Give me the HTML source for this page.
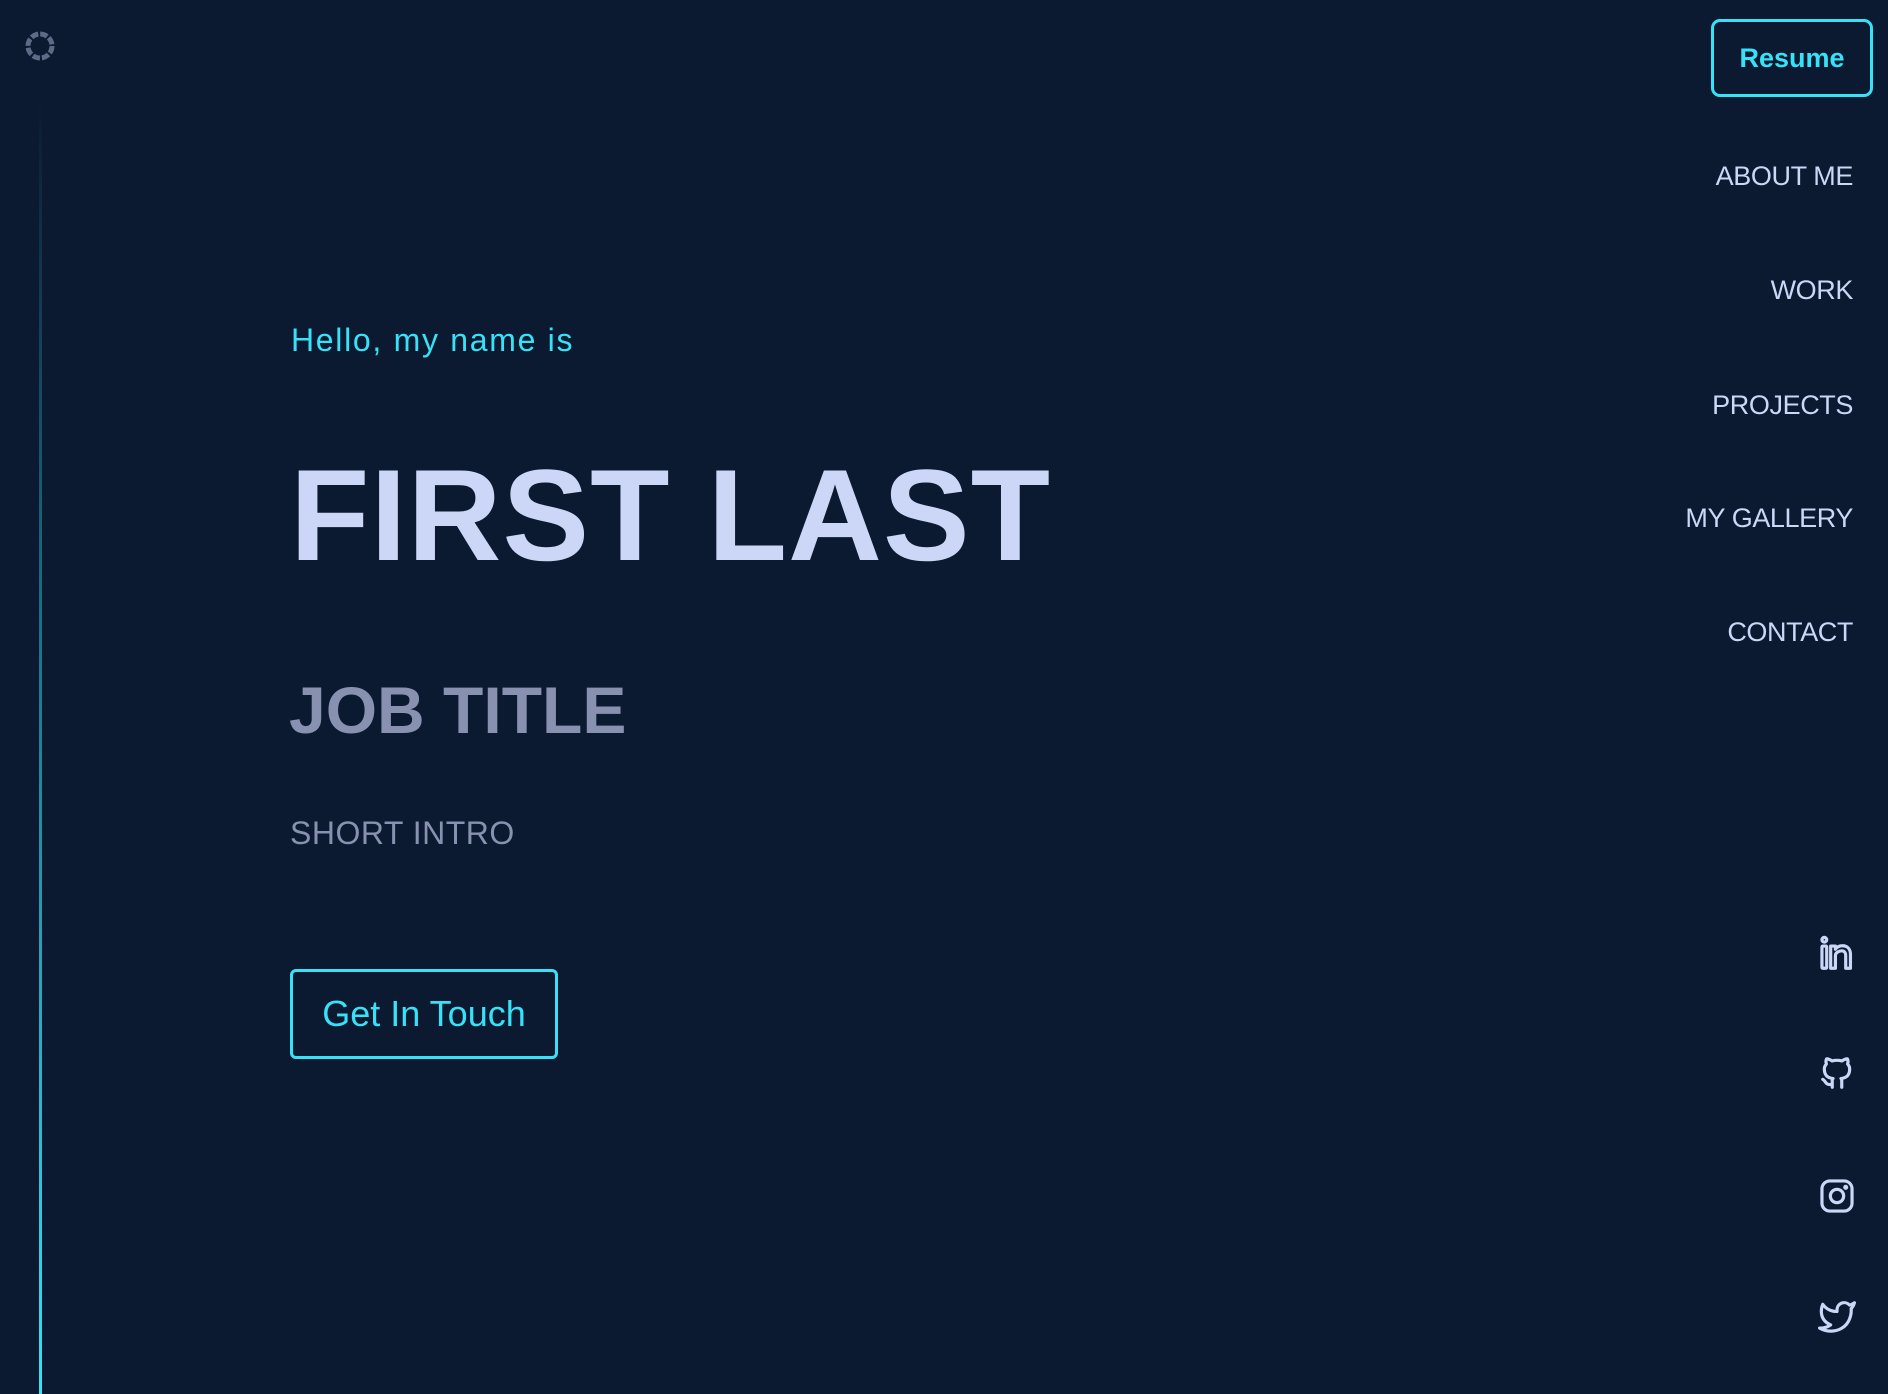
<!DOCTYPE html>
<html><head><meta charset="utf-8"><style>
html,body{margin:0;padding:0;width:1888px;height:1394px;background:#0b1a30;overflow:hidden;font-family:"Liberation Sans",sans-serif;}
.abs{position:absolute;}
.line{left:39px;top:100px;width:3px;height:1294px;background:linear-gradient(#0b1a30,#1b6f88 40%,#37e1f7);}
.resume{left:1711px;top:19px;width:156px;height:72px;border:3px solid #37e1f7;border-radius:9px;color:#37e1f7;font-weight:bold;font-size:27px;display:flex;align-items:center;justify-content:center;}
.nav{right:35px;color:#ccd6f6;font-size:27px;font-weight:300;letter-spacing:-0.4px;line-height:30px;}
.hello{left:291px;top:322px;color:#37e1f7;font-size:32px;letter-spacing:1.7px;}
.name{left:290px;top:440px;color:#ccd6f6;font-size:130px;font-weight:bold;line-height:150px;letter-spacing:1px;}
.job{left:289px;top:670px;color:#8892b0;font-size:66px;font-weight:bold;line-height:80px;}
.intro{left:290px;top:815px;color:#8892b0;font-size:32px;letter-spacing:0.5px;}
.btn{left:290px;top:969px;width:262px;height:84px;border:3px solid #37e1f7;border-radius:6px;color:#37e1f7;font-size:36px;display:flex;align-items:center;justify-content:center;}
svg.ic{position:absolute;left:1818px;width:38px;height:38px;fill:none;stroke:#ccd6f6;stroke-width:2;stroke-linecap:round;stroke-linejoin:round;}
</style></head><body>
<svg class="abs" style="left:24px;top:30px" width="32" height="32" viewBox="0 0 32 32">
<g stroke="#5d6b86" stroke-width="5" fill="none">
<circle cx="16" cy="16" r="12" stroke-dasharray="7.4 2"/>
</g></svg>
<div class="abs line"></div>
<div class="abs resume">Resume</div>
<div class="abs nav" style="top:161px">ABOUT ME</div>
<div class="abs nav" style="top:275px">WORK</div>
<div class="abs nav" style="top:390px">PROJECTS</div>
<div class="abs nav" style="top:503px">MY GALLERY</div>
<div class="abs nav" style="top:617px">CONTACT</div>
<div class="abs hello">Hello, my name is</div>
<div class="abs name">FIRST LAST</div>
<div class="abs job">JOB TITLE</div>
<div class="abs intro">SHORT INTRO</div>
<div class="abs btn">Get In Touch</div>
<svg class="ic" style="top:935px" viewBox="0 0 24 24"><circle cx="4" cy="3" r="1.5"/><rect x="2.5" y="7" width="3" height="14" rx=".5"/><path d="M8 21V7h3v2c1-1.5 2.5-2.2 4.5-2.2 3 0 5 2 5 5.5V21h-3v-8c0-2-1-3-2.5-3S11 11 11 13v8z"/></svg>
<svg class="ic" style="top:1054px" viewBox="0 0 24 24"><path d="M9 19c-4.3 1.4-4.3-2.5-6-3m12 5v-3.5c0-1 .1-1.4-.5-2 2.8-.3 5.5-1.4 5.5-6a4.6 4.6 0 0 0-1.3-3.2 4.2 4.2 0 0 0-.1-3.2s-1.1-.3-3.5 1.3a12.3 12.3 0 0 0-6.200 0C6.5 2.8 5.4 3.1 5.4 3.1a4.2 4.2 0 0 0-.1 3.2A4.6 4.6 0 0 0 4 9.5c0 4.6 2.7 5.700 5.5 6-.6.6-.6 1.2-.5 2V21"/></svg>
<svg class="ic" style="top:1177px" viewBox="0 0 24 24"><rect x="2.5" y="2.5" width="19" height="19" rx="5"/><circle cx="12" cy="12" r="4.2"/><circle cx="17.5" cy="6.5" r=".6" fill="#ccd6f6"/></svg>
<svg class="ic" style="top:1298px" viewBox="0 0 24 24"><path d="M23 3a10.9 10.9 0 0 1-3.1 1.5 4.5 4.5 0 0 0-7.900 3v1A10.7 10.7 0 0 1 3 4s-4 9 5 13a11.6 11.6 0 0 1-7 2c9 5 20 0 20-11.5a4.5 4.5 0 0 0-.1-.8A7.7 7.7 0 0 0 23 3z"/></svg>
</body></html>
